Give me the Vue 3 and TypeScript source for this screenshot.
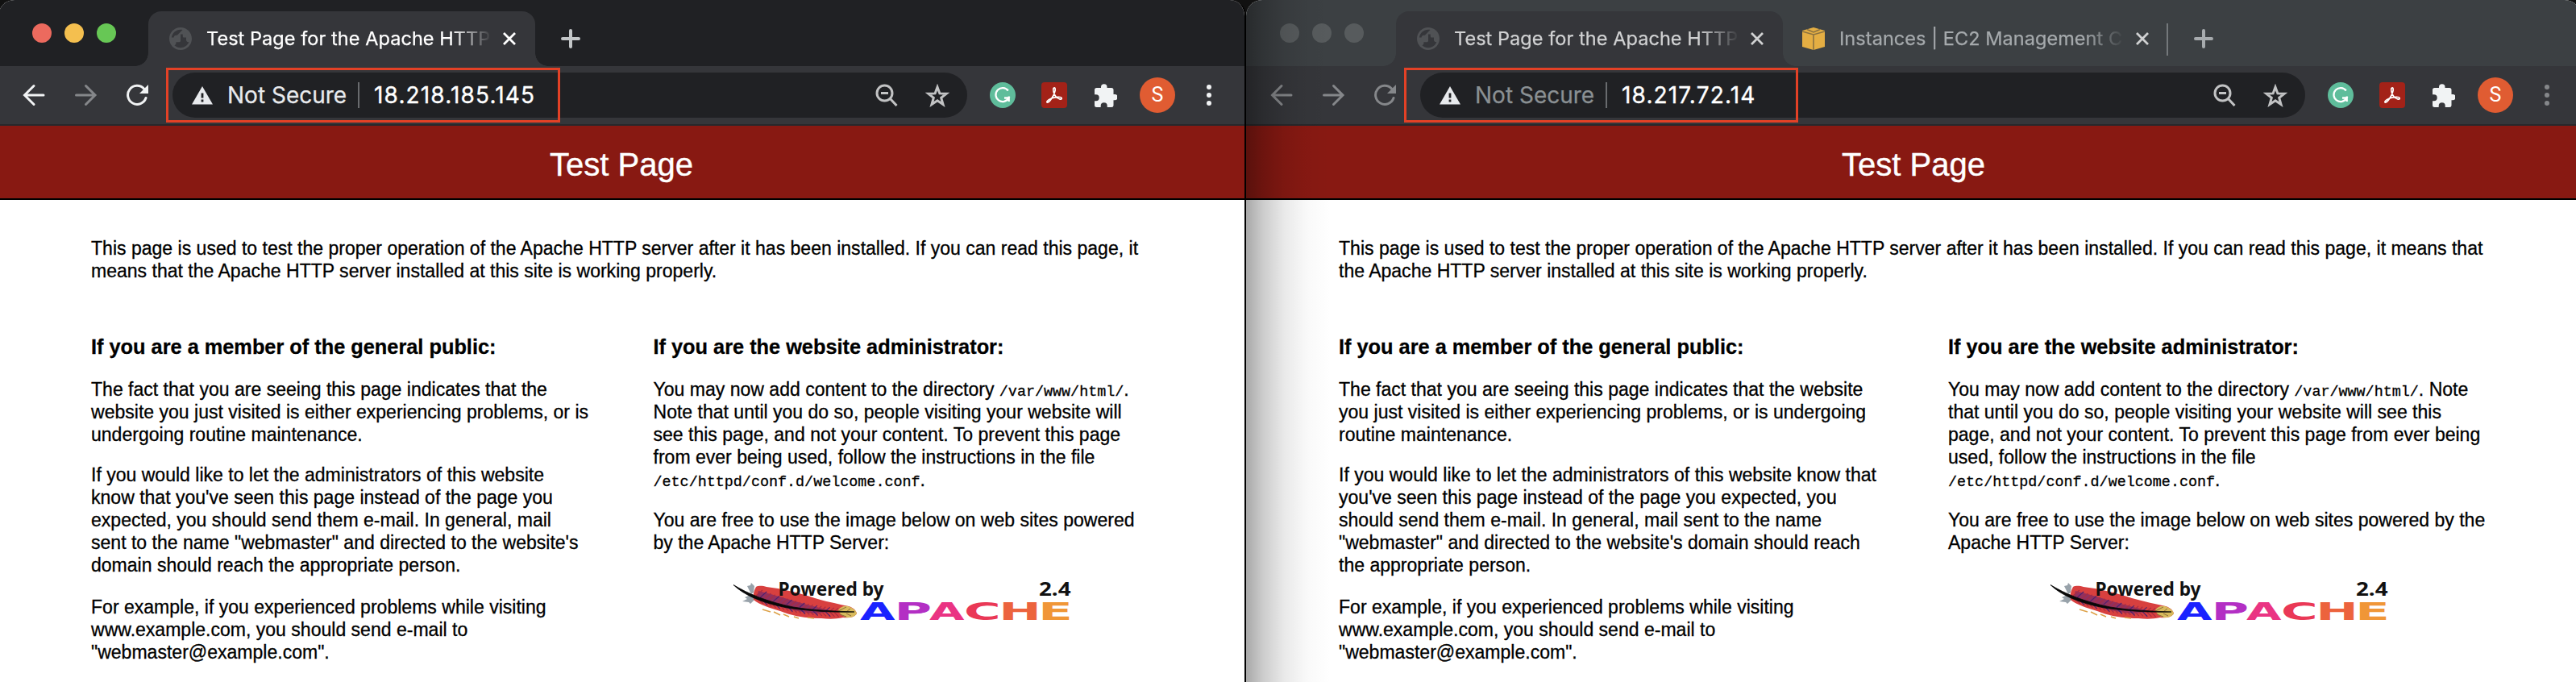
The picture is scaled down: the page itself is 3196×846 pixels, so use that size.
<script setup lang="ts">
interface Tab { title: string; icon: 'globe' | 'cube'; active: boolean }
interface Win { focused: boolean; tabs: Tab[]; address: string; intro: string[]; visitor: string[][]; admin: { a: string[]; b: string[] } }

const windows: Win[] = [
  {
    focused: true,
    tabs: [{ title: 'Test Page for the Apache HTTP', icon: 'globe', active: true }],
    address: '18.218.185.145',
    intro: [
      'This page is used to test the proper operation of the Apache HTTP server after it has been installed. If you can read this page, it',
      'means that the Apache HTTP server installed at this site is working properly.',
    ],
    visitor: [
      ['The fact that you are seeing this page indicates that the', 'website you just visited is either experiencing problems, or is', 'undergoing routine maintenance.'],
      ['If you would like to let the administrators of this website', "know that you've seen this page instead of the page you", 'expected, you should send them e-mail. In general, mail', "sent to the name \"webmaster\" and directed to the website's", 'domain should reach the appropriate person.'],
      ['For example, if you experienced problems while visiting', 'www.example.com, you should send e-mail to', '"webmaster@example.com".'],
    ],
    admin: {
      a: ['.', 'Note that until you do so, people visiting your website will', 'see this page, and not your content. To prevent this page', 'from ever being used, follow the instructions in the file'],
      b: ['You are free to use the image below on web sites powered', 'by the Apache HTTP Server:'],
    },
  },
  {
    focused: false,
    tabs: [
      { title: 'Test Page for the Apache HTTP', icon: 'globe', active: true },
      { title: 'Instances | EC2 Management C', icon: 'cube', active: false },
    ],
    address: '18.217.72.14',
    intro: [
      'This page is used to test the proper operation of the Apache HTTP server after it has been installed. If you can read this page, it means that',
      'the Apache HTTP server installed at this site is working properly.',
    ],
    visitor: [
      ['The fact that you are seeing this page indicates that the website', 'you just visited is either experiencing problems, or is undergoing', 'routine maintenance.'],
      ['If you would like to let the administrators of this website know that', "you've seen this page instead of the page you expected, you", 'should send them e-mail. In general, mail sent to the name', "\"webmaster\" and directed to the website's domain should reach", 'the appropriate person.'],
      ['For example, if you experienced problems while visiting', 'www.example.com, you should send e-mail to', '"webmaster@example.com".'],
    ],
    admin: {
      a: ['. Note', 'that until you do so, people visiting your website will see this', 'page, and not your content. To prevent this page from ever being', 'used, follow the instructions in the file'],
      b: ['You are free to use the image below on web sites powered by the', 'Apache HTTP Server:'],
    },
  },
]

const letters = [
  { c: 'A', x: 157, w: 43.5, fill: '#1a22ff' },
  { c: 'P', x: 199.4, w: 46.6, fill: '#b32fc4' },
  { c: 'A', x: 243, w: 43.5, fill: '#ea3483' },
  { c: 'C', x: 286, w: 45.7, fill: '#ea3856' },
  { c: 'H', x: 329.2, w: 52.6, fill: '#ec633d' },
  { c: 'E', x: 378.3, w: 42.6, fill: '#f09637' },
]

// Quill barbs, leaning away from the spine towards the tip.
const barbs = Array.from({ length: 19 }, (_, i) => {
  const x = 28 + i * 5.4
  const y = 18 + i * 1.9 - i * i * 0.045
  const len = 1 - i * 0.022
  return { up: `M${x} ${y}l${8 * len} ${-7 * len}`, down: `M${x} ${y + 1}l${9 * len} ${9 * len}`, dark: i % 3 !== 1 }
})
</script>

<template>
  <div class="desktop">
    <section v-for="w in windows" :key="w.address" class="window" :class="{ blurred: !w.focused }">
      <header class="tabstrip">
        <div class="lights"><i class="red" /><i class="amber" /><i class="green" /></div>
        <div v-for="t in w.tabs" :key="t.title" class="tab" :class="{ active: t.active }">
          <svg v-if="t.icon === 'globe'" class="favicon" viewBox="2 2 20 20">
            <path transform="rotate(90 12 12)" fill="#505255" d="M12 2C6.480 2 2 6.480 2 12s4.480 10 10 10 10-4.480 10-10S17.520 2 12 2zm-1 17.930c-3.950-.49-7-3.850-7-7.930 0-.62.08-1.210.21-1.790L9 15v1c0 1.100.9 2 2 2v1.930zm6.900-2.540c-.26-.81-1-1.390-1.900-1.390h-1v-3c0-.55-.45-1-1-1H8v-2h2c.55 0 1-.45 1-1V7h2c1.100 0 2-.9 2-2v-.41c2.930 1.190 5 4.060 5 7.410 0 2.080-.8 3.970-2.100 5.390z" />
          </svg>
          <svg v-else class="favicon" viewBox="0 0 28 28">
            <path fill="#e4ae43" d="M0 4l14-4 14 4v20l-14 4-14-4z" />
            <path d="M0 5l14 4 14-4M14 9v19M6 2.500l8 3.500 8-3.500" fill="none" stroke="#8b7240" stroke-width="1.600" />
          </svg>
          <span class="title">{{ t.title }}</span>
          <svg class="close" viewBox="0 0 18 18"><path d="M2 2l14 14M16 2L2 16" /></svg>
        </div>
        <span v-if="!w.focused" class="tab-sep" />
        <svg class="plus" viewBox="0 0 24 24"><path d="M12 2v20M2 12h20" /></svg>
      </header>

      <div class="toolbar">
        <svg class="nav back" viewBox="0 0 28 28"><path d="M26 14H3M14 2.500L2.500 14 14 25.500" /></svg>
        <svg class="nav fwd" viewBox="0 0 28 28"><path d="M1.500 14H24.500M13.500 2.500L25 14 13.500 25.500" /></svg>
        <svg class="nav reload" viewBox="0 0 28 28">
          <path d="M25 17.500A11.500 11.500 0 1 1 22.500 6" />
          <path class="tip" d="M28 1v11H17z" />
        </svg>
        <div class="omnibox">
          <svg class="warn" viewBox="0 0 26 23"><path fill="#e8eaed" d="M13 0l13 22.500H0z" /><path stroke="#202124" stroke-width="2.800" d="M13 8.500v6M13 16.500v3" /></svg>
          <span class="secure">Not Secure</span>
          <span class="bar" />
          <span class="address">{{ w.address }}</span>
          <svg class="lens" viewBox="0 0 28 28"><circle cx="11.500" cy="11.500" r="9.500" /><path d="M7 11.500h9M18.500 18.500l8 8.500" /></svg>
          <svg class="star" viewBox="0 0 30 29"><path d="M15 4l2.900 7.900 8.300.3-6.500 5.200 2.300 8.100-7-4.700-7 4.700 2.300-8.100-6.500-5.200 8.300-.3z" /></svg>
          <div class="callout" />
        </div>
        <svg class="ext" viewBox="0 0 32 32">
          <circle cx="16" cy="16" r="16" fill="#5fbd9b" />
          <path d="M22.800 10.500A8.500 8.500 0 1 0 23.500 19.500H18M23.700 17.500v6.500" fill="none" stroke="#fff" stroke-width="2.300" />
        </svg>
        <svg class="ext" viewBox="0 0 32 32">
          <rect width="32" height="32" rx="4" fill="#a32218" />
          <path d="M15 7.500c2-2 3 1 1.500 5-1.500 4.500-5.500 11.500-8.500 12.500-2.500.5-1-3 4.500-5s12-2.500 12.700-.2c.6 2.700-4.700 1-7.200-2C15.500 15 14 9.500 15 7.500z" fill="none" stroke="#fff" stroke-width="1.700" />
        </svg>
        <svg class="ext puzzle" viewBox="0 0 28.500 29">
          <path fill="#f1f3f4" d="M8 5V4a3.700 3.700 0 0 1 7.500 0v1H21a2.500 2.500 0 0 1 2.500 2.500V13H25a3.600 3.600 0 0 1 0 7.300h-1.500v6A2.500 2.500 0 0 1 21 29h-5.300v-1.800a4 4 0 0 0-8 0V29H2.500A2.500 2.500 0 0 1 0 26.500v-5.300h1.700a4 4 0 0 0 0-8H0V7.500A2.500 2.500 0 0 1 2.500 5z" />
        </svg>
        <span class="avatar">S</span>
        <svg class="dots" viewBox="0 0 6 26"><circle cx="3" cy="3" r="3" /><circle cx="3" cy="13" r="3" /><circle cx="3" cy="23" r="3" /></svg>
      </div>

      <h1>Test Page</h1>

      <main>
        <p class="intro"><span v-for="l in w.intro" :key="l" class="line">{{ l }}</span></p>
        <div class="columns">
          <div class="col">
            <h2>If you are a member of the general public:</h2>
            <p v-for="(p, i) in w.visitor" :key="i"><span v-for="l in p" :key="l" class="line">{{ l }}</span></p>
          </div>
          <div class="col">
            <h2>If you are the website administrator:</h2>
            <p>
              <span class="line">You may now add content to the directory <code>/var/www/html/</code>{{ w.admin.a[0] }}</span>
              <span v-for="l in w.admin.a.slice(1)" :key="l" class="line">{{ l }}</span>
              <span class="line"><code>/etc/httpd/conf.d/welcome.conf</code>.</span>
            </p>
            <p><span v-for="l in w.admin.b" :key="l" class="line">{{ l }}</span></p>
            <svg class="powered" viewBox="0 0 420 56">
              <path d="M17 6l4-1 1-3 4 4-1 8-3 2zM23 16l-9 4 3 2-6 3 8 1 2 2 6-6z" fill="#98a2aa" />
              <path d="M28 7c4-2 9-1 13 0 18 2 40 7 60 14 14 4 29 7 42 10 6 2 9 5 10 9-3 5-9 6-17 5-9 2-17 2-27 1-20 0-36-3-51-9-13-4-26-8-33-14-1-5 0-11 3-16z" fill="#d8403f" />
              <path d="M31 12c20 5 42 12 60 17l32 8-18 3c-25-1-52-9-76-20z" fill="#5a2378" opacity=".55" />
              <g fill="none" stroke-width="1.200">
                <g v-for="(b, i) in barbs" :key="i" :stroke="b.dark ? '#a82c42' : '#4b2270'"><path :d="b.up" /><path :d="b.down" /></g>
              </g>
              <path d="M36 35l10 3M50 38l8 4M62 41l7 3M75 44l6 2M92 45l8 1" fill="none" stroke="#dda24a" stroke-width="1.600" />
              <path d="M130 36c2-4 7-6 12-5 6 2 10 5 11 9-3 5-8 5-12 5-5-1-9-4-11-9z" fill="#d8bb5c" />
              <path d="M130 37l10-5M132 41l8 3M140 38l5-4M140 40l6 3" stroke="#8e6a3c" fill="none" />
              <path d="M0 4.500c18 11 42 21 74 27.500 28 4.500 50 5 76 6-26 1-54-1-80-4.500C38 28 14 18 0 4.500z" fill="#080808" stroke="#080808" stroke-width=".8" />
              <text x="55.500" y="18" class="brand" textLength="131" lengthAdjust="spacingAndGlyphs">Powered by</text>
              <text x="379" y="18" class="brand" textLength="39.500" lengthAdjust="spacingAndGlyphs">2.4</text>
              <text v-for="(l, i) in letters" :key="i" :x="l.x" y="47.500" class="wide" :fill="l.fill" :textLength="l.w" lengthAdjust="spacingAndGlyphs">{{ l.c }}</text>
            </svg>
          </div>
        </div>
      </main>
    </section>
  </div>
</template>

<style>
html, body { margin: 0; overflow: hidden; background: #fff; }
</style>

<style scoped>
* { box-sizing: border-box; }
.desktop { width: 3198px; height: 846px; overflow: hidden; display: grid; grid-template-columns: 1548px 1656px; margin-left: -2px; background: #111; }
.window { position: relative; height: 846px; background: #fff; overflow: hidden; border-radius: 20px 20px 0 0; font-family: "Liberation Sans", Arial, sans-serif; color: #000; }
.window:first-child { border-right: 2px solid #000; }
.blurred::after { content: ""; position: absolute; inset: 0 auto 0 0; width: 105px; background: linear-gradient(90deg, rgba(0,0,0,.34), rgba(0,0,0,.2) 20%, rgba(0,0,0,.085) 45%, rgba(0,0,0,.025) 72%, transparent); }
.tabstrip { display: flex; height: 82px; background: #202124; align-items: flex-end; font-family: Inter, Roboto, sans-serif; }
.blurred .tabstrip { background: #3c4043; }
.lights { width: 186px; height: 82px; display: flex; gap: 16px; padding: 29px 0 0 42px; }
.lights i { width: 24px; height: 24px; border-radius: 50%; }
.red { background: #ec6a5e; } .amber { background: #f4bf4f; } .green { background: #67c755; }
.blurred .lights i { background: #575b5d; }
.tab { position: relative; width: 480px; height: 68px; display: flex; align-items: center; padding: 0 23px 0 26px; color: #fff; }
.tab:not(.active) { width: 476px; padding-left: 24px; padding-right: 21px; }
.active { background: #35363a; border-radius: 16px 16px 0 0; }
.active::before, .active::after { content: ""; position: absolute; bottom: 0; width: 16px; height: 16px; background: radial-gradient(circle at 0 0, transparent 15.500px, #35363a 16px); }
.active::before { left: -16px; }
.active::after { right: -16px; transform: scaleX(-1); }
.favicon { width: 28px; height: 28px; flex: none; }
.title { width: 354px; margin-left: 18px; margin-right: 13px; flex: none; white-space: nowrap; font-size: 23.500px; line-height: 34px; letter-spacing: .06px; -webkit-text-stroke: .25px; -webkit-mask-image: linear-gradient(90deg, #000 86%, transparent); mask-image: linear-gradient(90deg, #000 86%, transparent); }
.blurred .title { color: #d0d1d2; }
.blurred .tab:not(.active) .title { color: #a5a9ac; }
.close { width: 18px; height: 18px; flex: none; stroke: #fff; stroke-width: 2.800; }
.blurred .close { stroke: #d0d1d2; }
.tab-sep { width: 2px; height: 40px; background: #74787b; margin-bottom: 13px; }
.plus { width: 24px; height: 24px; margin: 0 0 22px 32px; stroke: #c3c6c8; stroke-width: 4; stroke-linecap: round; }
.blurred .plus { stroke: #a7abae; }
.toolbar { height: 74px; background: #35363a; border-bottom: 2px solid #27282b; display: flex; align-items: center; padding: 0 41px 0 30px; font-family: Inter, Roboto, sans-serif; }
.blurred .toolbar { padding-right: 39px; }
.nav { width: 28px; height: 28px; flex: none; fill: none; stroke: #f1f3f4; stroke-width: 3; stroke-linecap: round; }
.fwd { margin-left: 37px; stroke: #85878a; }
.reload { margin-left: 35px; }
.nav .tip { fill: #f1f3f4; stroke: none; }
.blurred .nav { stroke: #85878a; }
.blurred .nav .tip { fill: #85878a; stroke: none; }
.omnibox { position: relative; flex: 1; height: 56px; margin-left: 30px; margin-right: 28px; border-radius: 28px; background: #202124; display: flex; align-items: center; padding: 0 22px 0 24px; font-size: 28px; }
.warn { width: 26px; height: 23px; }
.secure { width: 147px; margin-left: 18px; color: #e8eaed; white-space: nowrap; -webkit-text-stroke: .25px; }
.blurred .secure { color: #8a9093; }
.bar { width: 2px; height: 32px; background: #696b6e; margin: 0 18px 0 15px; }
.address { flex: 1; color: #fff; letter-spacing: 1.150px; -webkit-text-stroke: .35px; }
.lens, .star { width: 28px; height: 28px; fill: none; stroke: #c2c3c4; stroke-width: 3; }
.star { width: 30px; height: 29px; margin-left: 34px; }
.callout { position: absolute; left: -8px; top: -6px; width: 489px; height: 68px; border: 3px solid #e34126; }
.blurred .callout { left: -20px; }
.ext { width: 32px; height: 32px; flex: none; margin-right: 32px; }
.puzzle { width: 28.500px; height: 29px; margin: 0 28px 0 2px; }
.avatar { width: 44px; height: 44px; flex: none; border-radius: 50%; background: #e05c32; color: #fff; font-size: 25px; text-align: center; line-height: 44px; margin-right: 39px; font-family: Roboto, sans-serif; }
.dots { width: 6px; height: 26px; flex: none; fill: #f1f3f4; }
.blurred .dots { fill: #85878a; }
h1 { margin: 0; height: 92px; background: #881912; border-bottom: 2px solid #000; color: #fff; font-size: 40px; font-weight: 400; line-height: 96px; text-align: center; -webkit-text-stroke: .4px; }
main { padding: 46px 0 0 115px; font-size: 23.040px; line-height: 28px; white-space: nowrap; -webkit-text-stroke: .3px; }
p { margin: 0 0 22px; }
p:nth-of-type(2) { margin-bottom: 24px; }
.line { display: block; height: 28px; }
.columns { display: grid; grid-template-columns: 697.500px 1fr; padding-top: 43px; }
.blurred .columns { grid-template-columns: 756px 1fr; }
h2 { margin: 0 0 24px; font-size: 25.340px; line-height: 30px; font-weight: 700; }
code { font-family: "Liberation Mono", monospace; font-size: 18.400px; }
.powered { display: block; width: 420px; height: 56px; margin: 34px 0 0 99px; overflow: visible; -webkit-text-stroke: 0; }
.blurred .powered { margin-left: 127px; }
.brand { font: 700 24px "Noto Sans", "Open Sans", sans-serif; fill: #111; }
.wide { font: 700 30px "DejaVu Sans", sans-serif; }
</style>
